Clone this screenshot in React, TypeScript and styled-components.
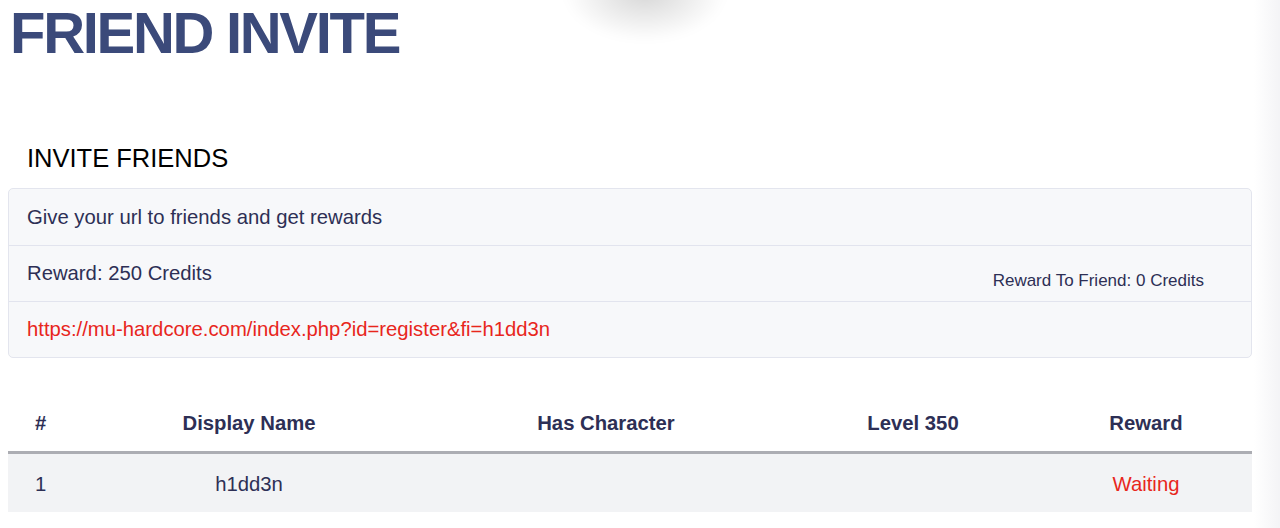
import React from "react";
import styled, { createGlobalStyle } from "styled-components";

const Global = createGlobalStyle`
  html, body { margin: 0; padding: 0; background: #ffffff; }
  body { font-family: "Liberation Sans", Arial, Helvetica, sans-serif; }
  * { box-sizing: border-box; }
`;

const Page = styled.div`
  position: relative;
  width: 1280px;
  height: 528px;
  overflow: hidden;
  background: #ffffff;
  padding: 0 28px 0 8px;
`;

const Shadow = styled.div`
  position: absolute;
  left: 565px;
  top: -55px;
  width: 160px;
  height: 95px;
  border-radius: 50%;
  background: radial-gradient(ellipse at center, rgba(0,0,0,0.16) 0%, rgba(0,0,0,0.06) 45%, rgba(0,0,0,0) 72%);
  filter: blur(5px);
  pointer-events: none;
`;

const Texture = styled.div`
  position: absolute;
  right: 0;
  top: 0;
  width: 26px;
  height: 100%;
  background: linear-gradient(90deg, rgba(240,240,242,0) 0%, rgba(236,236,240,0.6) 100%);
  pointer-events: none;
`;

const Title = styled.h1`
  margin: 0;
  padding: 0 0 0 2px;
  font-family: "Liberation Sans", Arial, sans-serif;
  font-weight: 700;
  font-size: 58px;
  line-height: 65px;
  color: #3b4a7a;
  letter-spacing: -2.3px;
`;

const Section = styled.section`
  margin-top: 78px;
`;

const SectionTitle = styled.h2`
  margin: 0 0 15px 0;
  padding-left: 19px;
  font-weight: 400;
  font-size: 25.5px;
  line-height: 30px;
  color: #000000;
`;

const Card = styled.div`
  width: 1244px;
  background: #f7f8fa;
  border: 1px solid #e3e5ee;
  border-radius: 5px;
`;

const CardRow = styled.div<{ $red?: boolean }>`
  display: flex;
  justify-content: space-between;
  align-items: center;
  height: 56px;
  padding: 0 47px 0 18px;
  font-size: 20.3px;
  color: ${(p) => (p.$red ? "#e8261c" : "#2d2f55")};
  & + & { border-top: 1px solid #e2e4ee; }
`;

const SmallNote = styled.span`
  font-size: 17px;
  padding-top: 14px;
  color: #2d2f55;
`;

const Table = styled.table`
  margin-top: 38px;
  width: 1244px;
  border-collapse: collapse;
  table-layout: fixed;
  font-size: 20.3px;
  color: #2d2f55;
`;

const Th = styled.th<{ $left?: boolean }>`
  height: 56px;
  font-weight: 700;
  text-align: ${(p) => (p.$left ? "left" : "center")};
  padding: 0 0 0 ${(p) => (p.$left ? "27px" : "0")};
  border-bottom: 3px solid #acadb3;
`;

const BodyRow = styled.tr`
  background: #f2f3f5;
`;

const Td = styled.td<{ $left?: boolean; $red?: boolean }>`
  height: 60px;
  text-align: ${(p) => (p.$left ? "left" : "center")};
  padding: 3px 0 0 ${(p) => (p.$left ? "27px" : "0")};
  color: ${(p) => (p.$red ? "#e8261c" : "#2d2f55")};
`;

export default function App() {
  return (
    <>
      <Global />
      <Page>
        <Shadow />
        <Texture />
        <Title>FRIEND INVITE</Title>
        <Section>
          <SectionTitle>INVITE FRIENDS</SectionTitle>
          <Card>
            <CardRow>Give your url to friends and get rewards</CardRow>
            <CardRow>
              <span>Reward: 250 Credits</span>
              <SmallNote>Reward To Friend: 0 Credits</SmallNote>
            </CardRow>
            <CardRow $red>https://mu-hardcore.com/index.php?id=register&amp;fi=h1dd3n</CardRow>
          </Card>
        </Section>
        <Table>
          <colgroup>
            <col style={{ width: 64 }} />
            <col style={{ width: 354 }} />
            <col style={{ width: 360 }} />
            <col style={{ width: 254 }} />
            <col style={{ width: 212 }} />
          </colgroup>
          <thead>
            <tr>
              <Th $left>#</Th>
              <Th>Display Name</Th>
              <Th>Has Character</Th>
              <Th>Level 350</Th>
              <Th>Reward</Th>
            </tr>
          </thead>
          <tbody>
            <BodyRow>
              <Td $left>1</Td>
              <Td>h1dd3n</Td>
              <Td></Td>
              <Td></Td>
              <Td $red>Waiting</Td>
            </BodyRow>
          </tbody>
        </Table>
      </Page>
    </>
  );
}
